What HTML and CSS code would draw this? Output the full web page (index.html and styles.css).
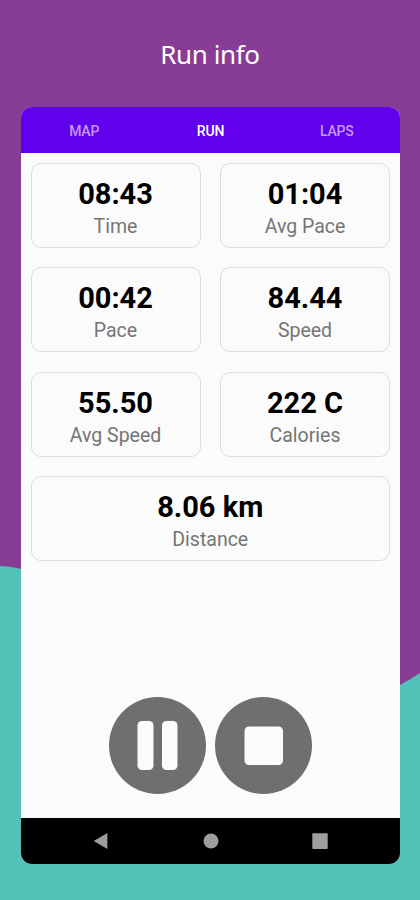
FILE: index.html
```html
<!DOCTYPE html>
<html lang="en">
<head>
    <meta charset="UTF-8">
    <meta name="viewport" content="width=device-width, initial-scale=1.0">
    <title>Run info</title>
    <link rel="stylesheet" href="styles.css">
</head>
<body>
    <svg class="backdrop" viewBox="0 0 420 900" aria-hidden="true">
        <path fill="#52c1b8" d="M0 566Q11 566 21 569C140 600 240 750 400 685Q411 679 420 673V900H0Z"/>
    </svg>

    <h1>Run info</h1>

    <main class="phone">
        <nav class="tabs">
            <a class="tab">MAP</a>
            <a class="tab active">RUN</a>
            <a class="tab">LAPS</a>
        </nav>

        <section class="stats">
            <article class="card">
                <strong>08:43</strong>
                <span>Time</span>
            </article>
            <article class="card">
                <strong>01:04</strong>
                <span>Avg Pace</span>
            </article>
            <article class="card">
                <strong>00:42</strong>
                <span>Pace</span>
            </article>
            <article class="card">
                <strong>84.44</strong>
                <span>Speed</span>
            </article>
            <article class="card">
                <strong>55.50</strong>
                <span>Avg Speed</span>
            </article>
            <article class="card">
                <strong>222 C</strong>
                <span>Calories</span>
            </article>
            <article class="card wide">
                <strong>8.06 km</strong>
                <span>Distance</span>
            </article>
        </section>

        <div class="controls">
            <button type="button" aria-label="Pause">
                <svg viewBox="0 0 97 97">
                    <rect x="28.5" y="24" width="16" height="49" rx="4.5"/>
                    <rect x="53" y="24" width="15.5" height="49" rx="4.5"/>
                </svg>
            </button>
            <button type="button" aria-label="Stop">
                <svg viewBox="0 0 97 97">
                    <rect x="29.5" y="29.5" width="38.5" height="38.5" rx="4.5"/>
                </svg>
            </button>
        </div>

        <footer class="navbar">
            <svg viewBox="0 0 16 16"><path d="M.7 8 14 .3q.4-.2.4.3v15q0 .4-.4.2Z"/></svg>
            <svg viewBox="0 0 16 16"><circle cx="8" cy="8" r="7.5"/></svg>
            <svg viewBox="0 0 16 16"><rect x=".3" y=".3" width="15.4" height="15.6" rx="1"/></svg>
        </footer>
    </main>
</body>
</html>
```
FILE: styles.css
```css
* {
    box-sizing: border-box;
}

body {
    margin: 0;
    height: 900px;
    overflow: hidden;
    background-color: #873c95;
    font-family: Roboto, sans-serif;
}

.backdrop {
    position: absolute;
    top: 0;
    left: 0;
    width: 420px;
    height: 900px;
    z-index: -1;
}

h1 {
    margin: 0;
    height: 107px;
    line-height: 108px;
    text-align: center;
    color: #fff;
    font-family: 'Noto Sans', sans-serif;
    font-size: 26px;
    font-weight: 400;
    letter-spacing: -0.4px;
}

.phone {
    display: flex;
    flex-direction: column;
    width: 379px;
    height: 757px;
    margin-left: 21px;
    border-radius: 11px;
    overflow: hidden;
    background-color: #fbfbfb;
}

.tabs {
    display: grid;
    grid-template-columns: repeat(3, 1fr);
    height: 46px;
    line-height: 48px;
    background-color: #6200ee;
    text-align: center;
}

.tab {
    color: #c29af8;
    font-size: 14px;
    font-weight: 500;
    letter-spacing: -0.2px;
}

.tab.active {
    color: #fff;
}

.stats {
    display: grid;
    grid-template-columns: repeat(2, 170px);
    grid-auto-rows: 85px;
    gap: 19.5px;
    padding: 9.5px 9.5px 0;
}

.card {
    display: flex;
    flex-direction: column;
    align-items: center;
    padding-top: 13px;
    border: 1px solid #dcdcdc;
    border-radius: 10px;
}

.card.wide {
    grid-column: span 2;
}

.card strong {
    color: #000;
    font-size: 29px;
    font-weight: 700;
    line-height: 34px;
}

.card span {
    color: #757575;
    font-size: 19.5px;
    line-height: 32px;
}

.controls {
    display: flex;
    justify-content: center;
    gap: 9px;
    margin-top: auto;
    padding-bottom: 24px;
}

.controls button {
    width: 97px;
    height: 97px;
    padding: 0;
    border: none;
    border-radius: 50%;
    background-color: #6f6f6f;
}

.controls svg {
    display: block;
    fill: #fbfbfb;
}

.navbar {
    display: flex;
    justify-content: space-between;
    align-items: center;
    height: 46px;
    padding: 0 72px;
    background-color: #000;
}

.navbar svg {
    width: 16px;
    height: 16px;
    fill: #9e9e9e;
}
```
